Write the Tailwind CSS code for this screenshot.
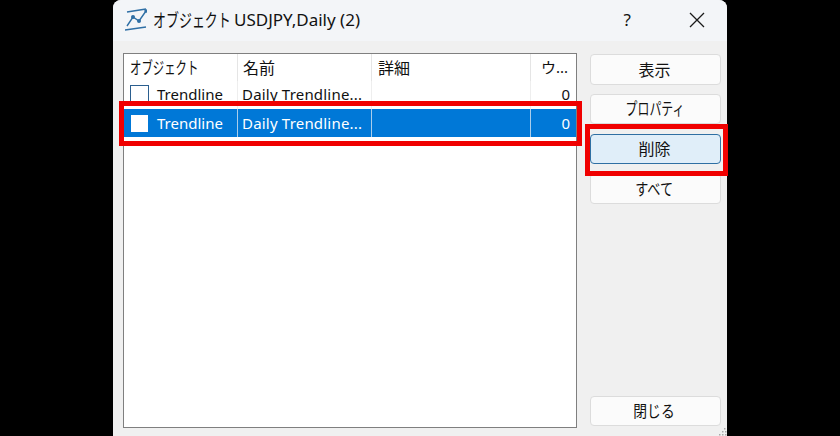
<!DOCTYPE html>
<html lang="ja">
<head>
  <meta charset="UTF-8">
  <title>オブジェクト USDJPY,Daily (2)</title>
  <script src="https://cdn.jsdelivr.net/npm/@tailwindcss/browser@4"></script>
</head>
<body class="bg-black w-[840px] h-[436px] overflow-hidden relative font-['Noto_Sans','Noto_Sans_CJK_JP',sans-serif] text-[15px] text-[#111111]">
  <div class="relative ml-[113px] w-[614px] h-[436px] bg-[#f0f0f0] rounded-t-lg flex flex-col">
    <!-- title bar -->
    <div class="h-[41px] bg-[#f3f5f8] rounded-t-lg flex items-center pl-[12px] pb-[2px] shrink-0">
      <svg class="w-[22px] h-[24px]" viewBox="0 0 22 24" fill="none" stroke="#2f6fa5" stroke-width="1.4">
        <path d="M2 4L21 1M0 22L21 19" />
        <path d="M2 18L8 9L14 13L21 3" />
        <circle cx="8" cy="9" r="1.3" fill="#2f6fa5" />
        <circle cx="14" cy="13" r="1.3" fill="#2f6fa5" />
        <circle cx="21" cy="3" r="1" fill="#2f6fa5" />
      </svg>
      <span class="ml-[6px] w-[81px] text-[18px] leading-none inline-block whitespace-nowrap origin-left scale-x-[0.72]">オブジェクト</span>
      <span class="text-[17px] leading-none whitespace-nowrap">USDJPY,Daily (2)</span>
      <span class="ml-auto mr-[58px] text-[17px] leading-none">?</span>
      <svg class="w-[16px] h-[16px] mr-[22px]" viewBox="0 0 16 16" stroke="#1a1a1a" stroke-width="1.3">
        <path d="M1 1L15 15M15 1L1 15" />
      </svg>
    </div>
    <div class="flex flex-1 pl-[10px] pr-[6px] pt-[12px] pb-[10px] gap-[13px]">
      <!-- object list -->
      <div class="w-[454px] -mb-[2px] bg-white border border-[#7f7f7f]">
        <div class="grid grid-cols-[114px_134px_159px_1fr] h-[27px] items-center">
          <div class="h-full pl-[6px] flex items-center border-r border-[#e5e5e5]">
            <span class="w-[68px] text-[17px] inline-block whitespace-nowrap origin-left scale-x-[0.67]">オブジェクト</span>
          </div>
          <div class="h-full pl-[5px] flex items-center border-r border-[#e5e5e5] text-[16px]">名前</div>
          <div class="h-full pl-[6px] flex items-center border-r border-[#e5e5e5] text-[16px]">詳細</div>
          <div class="h-full pl-[10px] flex items-center">ウ...</div>
        </div>
        <div class="grid grid-cols-[114px_134px_159px_1fr] h-[28px] items-center">
          <div class="h-full pl-[6px] pb-[2px] flex items-center gap-[8px] border-r border-[#eeeeee]">
            <span class="w-[19px] h-[19px] border border-[#2b5f8f]"></span>Trendline
          </div>
          <div class="h-full pl-[4px] pb-[2px] flex items-center tracking-[0.2px] border-r border-[#eeeeee]">Daily Trendline...</div>
          <div class="h-full border-r border-[#eeeeee]"></div>
          <div class="h-full pr-[6px] pb-[2px] flex items-center justify-end">0</div>
        </div>
        <div class="grid grid-cols-[114px_134px_159px_1fr] h-[28px] items-center bg-[#0078d7] text-white">
          <div class="h-full pl-[7px] flex items-center gap-[9px] border-r border-[#a9cdeb]">
            <span class="w-[17px] h-[17px] bg-white"></span>Trendline
          </div>
          <div class="h-full pl-[4px] flex items-center tracking-[0.2px] border-r border-[#a9cdeb]">Daily Trendline...</div>
          <div class="h-full border-r border-[#a9cdeb]"></div>
          <div class="h-full pr-[6px] flex items-center justify-end">0</div>
        </div>
      </div>
      <!-- buttons -->
      <div class="w-[131px] flex flex-col pt-[1px]">
        <button class="h-[31px] mb-[9px] pr-[2px] bg-[#fbfbfb] border border-[#dcdcdc] rounded text-[16px]">表示</button>
        <button class="h-[30px] mb-[10px] pr-[2px] bg-[#fbfbfb] border border-[#dcdcdc] rounded text-[17px]">
          <span class="inline-block scale-x-[0.7]">プロパティ</span>
        </button>
        <button class="h-[30px] mb-[9px] pr-[2px] bg-[#e0eef9] border border-[#2f6fa3] rounded text-[16px]">削除</button>
        <button class="h-[31px] pr-[2px] bg-[#fbfbfb] border border-[#dcdcdc] rounded text-[16px]">
          <span class="inline-block scale-x-[0.82]">すべて</span>
        </button>
        <button class="h-[30px] mt-auto pr-[2px] bg-[#fbfbfb] border border-[#dcdcdc] rounded text-[16px]">
          <span class="inline-block scale-x-[0.86]">閉じる</span>
        </button>
      </div>
    </div>
    <!-- resize grip -->
    <svg class="absolute right-0 bottom-0 w-[8px] h-[8px]" viewBox="0 0 8 8" fill="#a8a8a8">
      <rect x="5" y="0" width="1.5" height="1.5" />
      <rect x="3" y="3" width="1.5" height="1.5" />
      <rect x="6" y="3" width="1.5" height="1.5" />
      <rect x="0" y="6" width="1.5" height="1.5" />
      <rect x="3" y="6" width="1.5" height="1.5" />
      <rect x="6" y="6" width="1.5" height="1.5" />
    </svg>
  </div>
  <!-- red highlights -->
  <div class="absolute left-[119px] top-[101px] w-[463px] h-[45px] border-[5px] border-[#f00000]"></div>
  <div class="absolute left-[585px] top-[124px] w-[143px] h-[52px] border-[5px] border-[#f00000]"></div>
</body>
</html>
